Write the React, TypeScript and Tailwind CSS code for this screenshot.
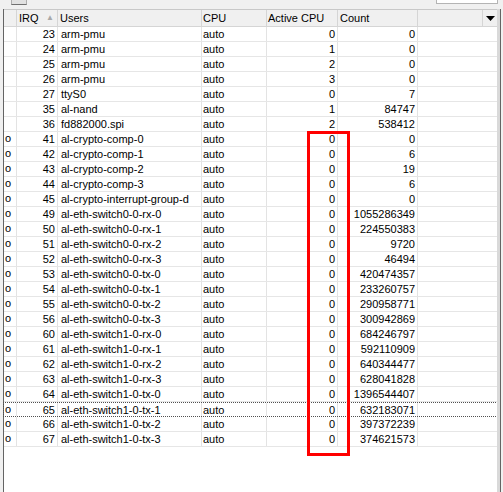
const rows: [string, string, string, string, string][] = [
  ["", "23", "arm-pmu", "0", "0"],
  ["", "24", "arm-pmu", "1", "0"],
  ["", "25", "arm-pmu", "2", "0"],
  ["", "26", "arm-pmu", "3", "0"],
  ["", "27", "ttyS0", "0", "7"],
  ["", "35", "al-nand", "1", "84747"],
  ["", "36", "fd882000.spi", "2", "538412"],
  ["o", "41", "al-crypto-comp-0", "0", "0"],
  ["o", "42", "al-crypto-comp-1", "0", "6"],
  ["o", "43", "al-crypto-comp-2", "0", "19"],
  ["o", "44", "al-crypto-comp-3", "0", "6"],
  ["o", "45", "al-crypto-interrupt-group-d", "0", "0"],
  ["o", "49", "al-eth-switch0-0-rx-0", "0", "1055286349"],
  ["o", "50", "al-eth-switch0-0-rx-1", "0", "224550383"],
  ["o", "51", "al-eth-switch0-0-rx-2", "0", "9720"],
  ["o", "52", "al-eth-switch0-0-rx-3", "0", "46494"],
  ["o", "53", "al-eth-switch0-0-tx-0", "0", "420474357"],
  ["o", "54", "al-eth-switch0-0-tx-1", "0", "233260757"],
  ["o", "55", "al-eth-switch0-0-tx-2", "0", "290958771"],
  ["o", "56", "al-eth-switch0-0-tx-3", "0", "300942869"],
  ["o", "60", "al-eth-switch1-0-rx-0", "0", "684246797"],
  ["o", "61", "al-eth-switch1-0-rx-1", "0", "592110909"],
  ["o", "62", "al-eth-switch1-0-rx-2", "0", "640344477"],
  ["o", "63", "al-eth-switch1-0-rx-3", "0", "628041828"],
  ["o", "64", "al-eth-switch1-0-tx-0", "0", "1396544407"],
  ["o", "65", "al-eth-switch1-0-tx-1", "0", "632183071"],
  ["o", "66", "al-eth-switch1-0-tx-2", "0", "397372239"],
  ["o", "67", "al-eth-switch1-0-tx-3", "0", "374621573"],
];

const cols = "grid grid-cols-[13px_41px_144px_65px_71px_80px_1fr]";
const cell = "border-r border-[#e3e3e3] overflow-hidden whitespace-nowrap";

export default function App() {
  return (
    <div
      className="relative w-[503px] h-[492px] bg-[#f0f0f0] text-[11px] leading-[15px] text-black overflow-hidden"
      style={{ fontFamily: '"Liberation Sans", Arial, sans-serif' }}
    >
      {/* toolbar strip, cut off at the top */}
      <div className="h-[9px] flex items-start">
        <div className="ml-[11px] w-[16px] h-[5px] bg-[#e1e1e1] border border-t-0 border-[#adadad] border-b-[#707070]" />
        <div className="ml-auto mr-[5px] w-[62px] h-[4px] bg-white border border-t-0 border-[#b4b4b4]" />
      </div>

      <div className="flex h-[483px]">
        <div className="w-[3px] bg-[#f0f0f0]" />
        <div className="w-px bg-[#646464]" />
        <div className="flex-1 bg-white border-t border-[#c8c8c8] flex flex-col">
          {/* header */}
          <div className={`${cols} h-[17px] bg-[#f0f0f0] border-b border-[#d5d5d5] leading-[16px]`}>
            <div className="border-r border-[#d5d5d5]" />
            <div className="border-r border-[#d5d5d5] pl-[2px] flex">
              <span>IRQ</span>
              <span className="ml-auto mr-[3px] text-[8px] text-[#a8a8a8]">▲</span>
            </div>
            <div className="border-r border-[#d5d5d5] pl-[2px]">Users</div>
            <div className="border-r border-[#d5d5d5] pl-[1px]">CPU</div>
            <div className="border-r border-[#d5d5d5] pl-[1px]">Active CPU</div>
            <div className="border-r border-[#d5d5d5] pl-[2px]">Count</div>
            <div className="flex">
              <div className="flex-1 border-r border-[#d5d5d5]" />
              <div className="w-[14px] flex items-center justify-center">
                <svg width="9" height="5" viewBox="0 0 9 5">
                  <path d="M0 0H9L4.5 5Z" fill="#000" />
                </svg>
              </div>
            </div>
          </div>

          {/* rows */}
          {rows.map((r, i) => (
            <div
              key={r[1]}
              className={`${cols} h-[15px] border-b ${
                i === 25 ? "border border-dotted border-[#505050] -mx-px" : "border-[#e6e6e6]"
              }`}
            >
              <div className={`${cell} pl-[1px] leading-[13px]`}>{r[0]}</div>
              <div className={`${cell} text-right pr-[2px] leading-[14px]`}>{r[1]}</div>
              <div className={`${cell} pl-[3px] leading-[14px]`}>{r[2]}</div>
              <div className={`${cell} pl-[1px] leading-[14px]`}>auto</div>
              <div className={`${cell} text-right pr-[2px] leading-[14px]`}>{r[3]}</div>
              <div className={`${cell} text-right pr-[2px] leading-[14px]`}>{r[4]}</div>
              <div />
            </div>
          ))}
        </div>
        <div className="w-[3px] bg-[#d9d9d9]" />
        <div className="w-px bg-[#646464]" />
        <div className="w-[2px] bg-[#f0f0f0]" />
      </div>

      {/* red highlight around the Active CPU values */}
      <div className="absolute left-[307px] top-[131px] w-[43px] h-[325px] border-[3px] border-[#ff0000]" />
    </div>
  );
}
